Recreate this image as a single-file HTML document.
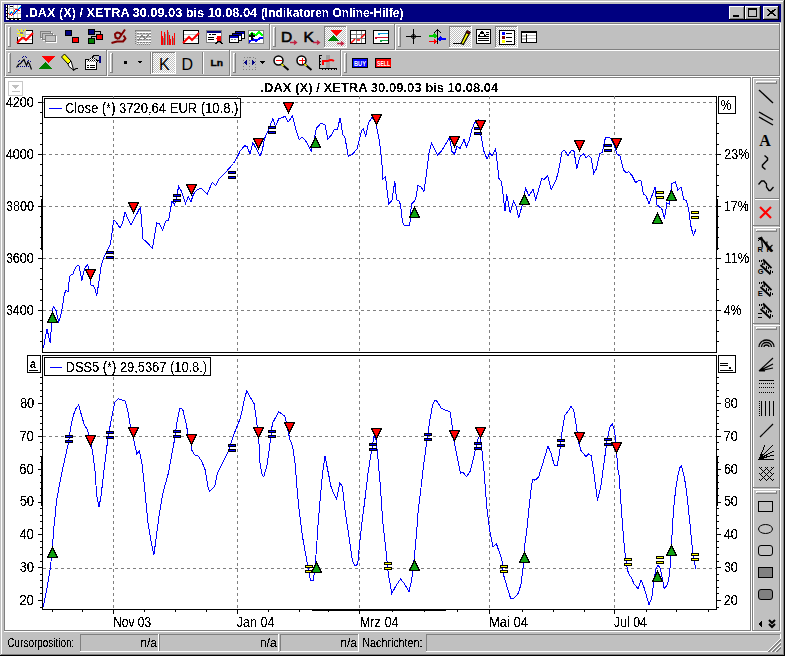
<!DOCTYPE html>
<html><head><meta charset="utf-8"><style>
html,body{margin:0;padding:0;background:#c0c0c0;}
svg{display:block;font-family:"Liberation Sans",sans-serif;}
</style></head><body>
<svg width="785" height="656" viewBox="0 0 785 656" shape-rendering="crispEdges">
<rect x="0" y="0" width="785" height="656" fill="#c0c0c0"/>
<rect x="1" y="1" width="782" height="1" fill="#ffffff"/>
<rect x="1" y="1" width="1" height="653" fill="#ffffff"/>
<rect x="783" y="1" width="1" height="654" fill="#808080"/>
<rect x="1" y="654" width="783" height="1" fill="#808080"/>
<rect x="784" y="0" width="1" height="656" fill="#000000"/>
<rect x="0" y="655" width="785" height="1" fill="#000000"/>
<rect x="4" y="4" width="777" height="18" fill="#000080"/>
<text id="t0" x="25.125" y="17" font-size="12.2" text-anchor="start" font-weight="bold" fill="#fff" textLength="232" lengthAdjust="spacingAndGlyphs" filter="url(#crispb)">.DAX (X) / XETRA 30.09.03 bis 10.08.04</text>
<text id="t1" x="260.875" y="17" font-size="12.2" text-anchor="start" font-weight="bold" fill="#fff" textLength="142.5" lengthAdjust="spacingAndGlyphs" filter="url(#crispb)">(Indikatoren Online-Hilfe)</text>
<rect x="6" y="5" width="15" height="15" fill="#fff"/>
<rect x="9" y="5" width="1" height="13" fill="#c0c0c0"/><rect x="13" y="5" width="1" height="13" fill="#c0c0c0"/><rect x="17" y="5" width="1" height="13" fill="#c0c0c0"/>
<rect x="8" y="8" width="13" height="1" fill="#c0c0c0"/><rect x="8" y="13" width="13" height="1" fill="#c0c0c0"/>
<rect x="7" y="5" width="1" height="14" fill="#000"/><rect x="7" y="18" width="14" height="1" fill="#000"/>
<path d="M6.5 7 V19" stroke="#000" stroke-dasharray="1 2"/><path d="M9 19.5 H21" stroke="#000" stroke-dasharray="2 2"/>
<rect x="10" y="6" width="3" height="1" fill="#000"/>
<path d="M8.5 14.5 L11.5 11.5 L13.5 13.5 L20.5 6.5" stroke="#0ff" fill="none"/>
<path d="M8.5 15.5 L11.5 12.5 L13.5 14.5 L20.5 7.5" stroke="#00f" fill="none"/>
<path d="M8.5 13.5 L11.5 15.5 L15.5 9.5 L17 9.5 L20.5 11.5" stroke="#f00" fill="none"/>
<rect x="729" y="6" width="16" height="14" fill="#000000"/>
<rect x="729" y="6" width="15" height="13" fill="#ffffff"/>
<rect x="730" y="7" width="14" height="12" fill="#808080"/>
<rect x="730" y="7" width="13" height="11" fill="#c0c0c0"/>
<rect x="745" y="6" width="16" height="14" fill="#000000"/>
<rect x="745" y="6" width="15" height="13" fill="#ffffff"/>
<rect x="746" y="7" width="14" height="12" fill="#808080"/>
<rect x="746" y="7" width="13" height="11" fill="#c0c0c0"/>
<rect x="763" y="6" width="16" height="14" fill="#000000"/>
<rect x="763" y="6" width="15" height="13" fill="#ffffff"/>
<rect x="764" y="7" width="14" height="12" fill="#808080"/>
<rect x="764" y="7" width="13" height="11" fill="#c0c0c0"/>
<rect x="733" y="15" width="6" height="2" fill="#000000"/>
<rect x="748" y="8" width="9" height="9" fill="#000000"/>
<rect x="749" y="10" width="7" height="6" fill="#c0c0c0"/>
<path d="M767 9 L775 16 M768 9 L776 16 M775 9 L767 16 M776 9 L768 16" stroke="#000" stroke-width="1" shape-rendering="crispEdges"/>
<rect x="4" y="23" width="776" height="1" fill="#808080"/>
<rect x="4" y="49" width="776" height="1" fill="#808080"/>
<rect x="4" y="75" width="776" height="1" fill="#808080"/>
<rect x="5" y="24" width="776" height="1" fill="#ffffff"/>
<rect x="5" y="50" width="776" height="1" fill="#ffffff"/>
<rect x="5" y="76" width="776" height="1" fill="#ffffff"/>
<rect x="4" y="23" width="1" height="53" fill="#808080"/>
<rect x="5" y="24" width="1" height="52" fill="#ffffff"/>
<rect x="779" y="24" width="1" height="52" fill="#808080"/>
<rect x="780" y="23" width="1" height="54" fill="#ffffff"/>
<rect x="8" y="27" width="3" height="20" fill="#808080"/>
<rect x="8" y="27" width="2" height="19" fill="#ffffff"/>
<rect x="9" y="28" width="1" height="18" fill="#c0c0c0"/>
<rect x="269" y="23" width="1" height="27" fill="#808080"/>
<rect x="270" y="24" width="1" height="26" fill="#ffffff"/>
<rect x="273" y="27" width="3" height="20" fill="#808080"/>
<rect x="273" y="27" width="2" height="19" fill="#ffffff"/>
<rect x="274" y="28" width="1" height="18" fill="#c0c0c0"/>
<rect x="394" y="23" width="1" height="27" fill="#808080"/>
<rect x="395" y="24" width="1" height="26" fill="#ffffff"/>
<rect x="398" y="27" width="3" height="20" fill="#808080"/>
<rect x="398" y="27" width="2" height="19" fill="#ffffff"/>
<rect x="399" y="28" width="1" height="18" fill="#c0c0c0"/>
<rect x="8" y="53" width="3" height="20" fill="#808080"/>
<rect x="8" y="53" width="2" height="19" fill="#ffffff"/>
<rect x="9" y="54" width="1" height="18" fill="#c0c0c0"/>
<rect x="106" y="49" width="1" height="27" fill="#808080"/>
<rect x="107" y="50" width="1" height="26" fill="#ffffff"/>
<rect x="110" y="53" width="3" height="20" fill="#808080"/>
<rect x="110" y="53" width="2" height="19" fill="#ffffff"/>
<rect x="111" y="54" width="1" height="18" fill="#c0c0c0"/>
<rect x="229" y="49" width="1" height="27" fill="#808080"/>
<rect x="230" y="50" width="1" height="26" fill="#ffffff"/>
<rect x="233" y="53" width="3" height="20" fill="#808080"/>
<rect x="233" y="53" width="2" height="19" fill="#ffffff"/>
<rect x="234" y="54" width="1" height="18" fill="#c0c0c0"/>
<rect x="340" y="49" width="1" height="27" fill="#808080"/>
<rect x="341" y="50" width="1" height="26" fill="#ffffff"/>
<rect x="344" y="53" width="3" height="20" fill="#808080"/>
<rect x="344" y="53" width="2" height="19" fill="#ffffff"/>
<rect x="345" y="54" width="1" height="18" fill="#c0c0c0"/>
<rect x="150" y="52" width="1" height="22" fill="#808080"/>
<rect x="151" y="52" width="1" height="22" fill="#ffffff"/>
<rect x="202" y="52" width="1" height="22" fill="#808080"/>
<rect x="203" y="52" width="1" height="22" fill="#ffffff"/>
<rect x="4" y="77" width="747" height="1" fill="#808080"/>
<rect x="4" y="77" width="1" height="554" fill="#808080"/>
<rect x="4" y="630" width="747" height="1" fill="#808080"/>
<rect x="750" y="77" width="1" height="554" fill="#808080"/>
<rect x="4" y="631" width="748" height="1" fill="#ffffff"/>
<rect x="751" y="77" width="1" height="555" fill="#ffffff"/>
<rect x="5" y="78" width="745" height="552" fill="#ffffff"/>
<rect x="752" y="77" width="1" height="555" fill="#808080"/>
<rect x="753" y="77" width="1" height="554" fill="#ffffff"/>
<rect x="779" y="77" width="1" height="555" fill="#808080"/>
<rect x="780" y="77" width="1" height="555" fill="#ffffff"/>
<rect x="752" y="77" width="28" height="1" fill="#808080"/>
<rect x="753" y="78" width="26" height="1" fill="#ffffff"/>
<rect x="752" y="631" width="29" height="1" fill="#ffffff"/>
<rect x="753" y="225" width="27" height="1" fill="#808080"/>
<rect x="753" y="323" width="27" height="1" fill="#808080"/>
<rect x="753" y="227" width="27" height="1" fill="#ffffff"/>
<rect x="753" y="487" width="27" height="1" fill="#808080"/>
<rect x="753" y="325" width="27" height="1" fill="#ffffff"/>
<rect x="753" y="630" width="27" height="1" fill="#808080"/>
<rect x="753" y="489" width="27" height="1" fill="#ffffff"/>
<rect x="756" y="81" width="21" height="3" fill="#808080"/>
<rect x="756" y="81" width="20" height="2" fill="#ffffff"/>
<rect x="757" y="82" width="19" height="1" fill="#c0c0c0"/>
<rect x="756" y="229" width="21" height="3" fill="#808080"/>
<rect x="756" y="229" width="20" height="2" fill="#ffffff"/>
<rect x="757" y="230" width="19" height="1" fill="#c0c0c0"/>
<rect x="756" y="327" width="21" height="3" fill="#808080"/>
<rect x="756" y="327" width="20" height="2" fill="#ffffff"/>
<rect x="757" y="328" width="19" height="1" fill="#c0c0c0"/>
<rect x="756" y="491" width="21" height="3" fill="#808080"/>
<rect x="756" y="491" width="20" height="2" fill="#ffffff"/>
<rect x="757" y="492" width="19" height="1" fill="#c0c0c0"/>
<rect x="755" y="198" width="24" height="1" fill="#808080"/>
<rect x="755" y="199" width="24" height="1" fill="#ffffff"/>
<text id="t2" x="7.375" y="647" font-size="12" text-anchor="start" font-weight="normal" fill="#000" textLength="67" lengthAdjust="spacingAndGlyphs" filter="url(#crisp)">Cursorposition:</text>
<rect x="80" y="634" width="79" height="1" fill="#808080"/>
<rect x="80" y="634" width="1" height="18" fill="#808080"/>
<rect x="80" y="651" width="79" height="1" fill="#ffffff"/>
<rect x="158" y="634" width="1" height="18" fill="#ffffff"/>
<rect x="159" y="634" width="120" height="1" fill="#808080"/>
<rect x="159" y="634" width="1" height="18" fill="#808080"/>
<rect x="159" y="651" width="120" height="1" fill="#ffffff"/>
<rect x="278" y="634" width="1" height="18" fill="#ffffff"/>
<rect x="280" y="634" width="79" height="1" fill="#808080"/>
<rect x="280" y="634" width="1" height="18" fill="#808080"/>
<rect x="280" y="651" width="79" height="1" fill="#ffffff"/>
<rect x="358" y="634" width="1" height="18" fill="#ffffff"/>
<rect x="426" y="634" width="355" height="1" fill="#808080"/>
<rect x="426" y="634" width="1" height="18" fill="#808080"/>
<rect x="426" y="651" width="355" height="1" fill="#ffffff"/>
<rect x="780" y="634" width="1" height="18" fill="#ffffff"/>
<text id="t3" x="157.000" y="647" font-size="12" text-anchor="end" font-weight="normal" fill="#000" filter="url(#crisp)">n/a</text>
<text id="t4" x="276.625" y="647" font-size="12" text-anchor="end" font-weight="normal" fill="#000" filter="url(#crisp)">n/a</text>
<text id="t5" x="357.000" y="647" font-size="12" text-anchor="end" font-weight="normal" fill="#000" filter="url(#crisp)">n/a</text>
<text id="t6" x="362.375" y="647" font-size="12" text-anchor="start" font-weight="normal" fill="#000" textLength="60" lengthAdjust="spacingAndGlyphs" filter="url(#crisp)">Nachrichten:</text>
<rect x="767" y="651" width="1" height="1" fill="#c0c0c0"/>
<rect x="768" y="650" width="1" height="1" fill="#c0c0c0"/>
<rect x="768" y="651" width="1" height="1" fill="#c0c0c0"/>
<rect x="769" y="649" width="1" height="1" fill="#c0c0c0"/>
<rect x="769" y="650" width="1" height="1" fill="#c0c0c0"/>
<rect x="769" y="651" width="1" height="1" fill="#c0c0c0"/>
<rect x="770" y="648" width="1" height="1" fill="#c0c0c0"/>
<rect x="770" y="649" width="1" height="1" fill="#c0c0c0"/>
<rect x="770" y="650" width="1" height="1" fill="#c0c0c0"/>
<rect x="770" y="651" width="1" height="1" fill="#c0c0c0"/>
<rect x="771" y="647" width="1" height="1" fill="#c0c0c0"/>
<rect x="771" y="648" width="1" height="1" fill="#c0c0c0"/>
<rect x="771" y="649" width="1" height="1" fill="#c0c0c0"/>
<rect x="771" y="650" width="1" height="1" fill="#c0c0c0"/>
<rect x="771" y="651" width="1" height="1" fill="#c0c0c0"/>
<rect x="772" y="646" width="1" height="1" fill="#c0c0c0"/>
<rect x="772" y="647" width="1" height="1" fill="#c0c0c0"/>
<rect x="772" y="648" width="1" height="1" fill="#c0c0c0"/>
<rect x="772" y="649" width="1" height="1" fill="#c0c0c0"/>
<rect x="772" y="650" width="1" height="1" fill="#c0c0c0"/>
<rect x="772" y="651" width="1" height="1" fill="#c0c0c0"/>
<rect x="773" y="645" width="1" height="1" fill="#c0c0c0"/>
<rect x="773" y="646" width="1" height="1" fill="#c0c0c0"/>
<rect x="773" y="647" width="1" height="1" fill="#c0c0c0"/>
<rect x="773" y="648" width="1" height="1" fill="#c0c0c0"/>
<rect x="773" y="649" width="1" height="1" fill="#c0c0c0"/>
<rect x="773" y="650" width="1" height="1" fill="#c0c0c0"/>
<rect x="773" y="651" width="1" height="1" fill="#c0c0c0"/>
<rect x="774" y="644" width="1" height="1" fill="#c0c0c0"/>
<rect x="774" y="645" width="1" height="1" fill="#c0c0c0"/>
<rect x="774" y="646" width="1" height="1" fill="#c0c0c0"/>
<rect x="774" y="647" width="1" height="1" fill="#c0c0c0"/>
<rect x="774" y="648" width="1" height="1" fill="#c0c0c0"/>
<rect x="774" y="649" width="1" height="1" fill="#c0c0c0"/>
<rect x="774" y="650" width="1" height="1" fill="#c0c0c0"/>
<rect x="774" y="651" width="1" height="1" fill="#c0c0c0"/>
<rect x="775" y="643" width="1" height="1" fill="#c0c0c0"/>
<rect x="775" y="644" width="1" height="1" fill="#c0c0c0"/>
<rect x="775" y="645" width="1" height="1" fill="#c0c0c0"/>
<rect x="775" y="646" width="1" height="1" fill="#c0c0c0"/>
<rect x="775" y="647" width="1" height="1" fill="#c0c0c0"/>
<rect x="775" y="648" width="1" height="1" fill="#c0c0c0"/>
<rect x="775" y="649" width="1" height="1" fill="#c0c0c0"/>
<rect x="775" y="650" width="1" height="1" fill="#c0c0c0"/>
<rect x="775" y="651" width="1" height="1" fill="#c0c0c0"/>
<rect x="776" y="642" width="1" height="1" fill="#c0c0c0"/>
<rect x="776" y="643" width="1" height="1" fill="#c0c0c0"/>
<rect x="776" y="644" width="1" height="1" fill="#c0c0c0"/>
<rect x="776" y="645" width="1" height="1" fill="#c0c0c0"/>
<rect x="776" y="646" width="1" height="1" fill="#c0c0c0"/>
<rect x="776" y="647" width="1" height="1" fill="#c0c0c0"/>
<rect x="776" y="648" width="1" height="1" fill="#c0c0c0"/>
<rect x="776" y="649" width="1" height="1" fill="#c0c0c0"/>
<rect x="776" y="650" width="1" height="1" fill="#c0c0c0"/>
<rect x="776" y="651" width="1" height="1" fill="#c0c0c0"/>
<rect x="777" y="641" width="1" height="1" fill="#c0c0c0"/>
<rect x="777" y="642" width="1" height="1" fill="#c0c0c0"/>
<rect x="777" y="643" width="1" height="1" fill="#c0c0c0"/>
<rect x="777" y="644" width="1" height="1" fill="#c0c0c0"/>
<rect x="777" y="645" width="1" height="1" fill="#c0c0c0"/>
<rect x="777" y="646" width="1" height="1" fill="#c0c0c0"/>
<rect x="777" y="647" width="1" height="1" fill="#c0c0c0"/>
<rect x="777" y="648" width="1" height="1" fill="#c0c0c0"/>
<rect x="777" y="649" width="1" height="1" fill="#c0c0c0"/>
<rect x="777" y="650" width="1" height="1" fill="#c0c0c0"/>
<rect x="777" y="651" width="1" height="1" fill="#c0c0c0"/>
<rect x="778" y="640" width="1" height="1" fill="#c0c0c0"/>
<rect x="778" y="641" width="1" height="1" fill="#c0c0c0"/>
<rect x="778" y="642" width="1" height="1" fill="#c0c0c0"/>
<rect x="778" y="643" width="1" height="1" fill="#c0c0c0"/>
<rect x="778" y="644" width="1" height="1" fill="#c0c0c0"/>
<rect x="778" y="645" width="1" height="1" fill="#c0c0c0"/>
<rect x="778" y="646" width="1" height="1" fill="#c0c0c0"/>
<rect x="778" y="647" width="1" height="1" fill="#c0c0c0"/>
<rect x="778" y="648" width="1" height="1" fill="#c0c0c0"/>
<rect x="778" y="649" width="1" height="1" fill="#c0c0c0"/>
<rect x="778" y="650" width="1" height="1" fill="#c0c0c0"/>
<rect x="778" y="651" width="1" height="1" fill="#c0c0c0"/>
<rect x="779" y="639" width="1" height="1" fill="#c0c0c0"/>
<rect x="779" y="640" width="1" height="1" fill="#c0c0c0"/>
<rect x="779" y="641" width="1" height="1" fill="#c0c0c0"/>
<rect x="779" y="642" width="1" height="1" fill="#c0c0c0"/>
<rect x="779" y="643" width="1" height="1" fill="#c0c0c0"/>
<rect x="779" y="644" width="1" height="1" fill="#c0c0c0"/>
<rect x="779" y="645" width="1" height="1" fill="#c0c0c0"/>
<rect x="779" y="646" width="1" height="1" fill="#c0c0c0"/>
<rect x="779" y="647" width="1" height="1" fill="#c0c0c0"/>
<rect x="779" y="648" width="1" height="1" fill="#c0c0c0"/>
<rect x="779" y="649" width="1" height="1" fill="#c0c0c0"/>
<rect x="779" y="650" width="1" height="1" fill="#c0c0c0"/>
<rect x="779" y="651" width="1" height="1" fill="#c0c0c0"/>
<rect x="780" y="638" width="1" height="1" fill="#c0c0c0"/>
<rect x="780" y="639" width="1" height="1" fill="#c0c0c0"/>
<rect x="780" y="640" width="1" height="1" fill="#c0c0c0"/>
<rect x="780" y="641" width="1" height="1" fill="#c0c0c0"/>
<rect x="780" y="642" width="1" height="1" fill="#c0c0c0"/>
<rect x="780" y="643" width="1" height="1" fill="#c0c0c0"/>
<rect x="780" y="644" width="1" height="1" fill="#c0c0c0"/>
<rect x="780" y="645" width="1" height="1" fill="#c0c0c0"/>
<rect x="780" y="646" width="1" height="1" fill="#c0c0c0"/>
<rect x="780" y="647" width="1" height="1" fill="#c0c0c0"/>
<rect x="780" y="648" width="1" height="1" fill="#c0c0c0"/>
<rect x="780" y="649" width="1" height="1" fill="#c0c0c0"/>
<rect x="780" y="650" width="1" height="1" fill="#c0c0c0"/>
<rect x="780" y="651" width="1" height="1" fill="#c0c0c0"/>
<rect x="767" y="651" width="1" height="1" fill="#ffffff"/>
<rect x="768" y="650" width="1" height="1" fill="#ffffff"/>
<rect x="769" y="649" width="1" height="1" fill="#ffffff"/>
<rect x="770" y="648" width="1" height="1" fill="#ffffff"/>
<rect x="771" y="647" width="1" height="1" fill="#ffffff"/>
<rect x="772" y="646" width="1" height="1" fill="#ffffff"/>
<rect x="773" y="645" width="1" height="1" fill="#ffffff"/>
<rect x="774" y="644" width="1" height="1" fill="#ffffff"/>
<rect x="775" y="643" width="1" height="1" fill="#ffffff"/>
<rect x="776" y="642" width="1" height="1" fill="#ffffff"/>
<rect x="777" y="641" width="1" height="1" fill="#ffffff"/>
<rect x="778" y="640" width="1" height="1" fill="#ffffff"/>
<rect x="779" y="639" width="1" height="1" fill="#ffffff"/>
<rect x="780" y="638" width="1" height="1" fill="#ffffff"/>
<rect x="768" y="651" width="1" height="1" fill="#808080"/>
<rect x="769" y="650" width="1" height="1" fill="#808080"/>
<rect x="770" y="649" width="1" height="1" fill="#808080"/>
<rect x="771" y="648" width="1" height="1" fill="#808080"/>
<rect x="772" y="647" width="1" height="1" fill="#808080"/>
<rect x="773" y="646" width="1" height="1" fill="#808080"/>
<rect x="774" y="645" width="1" height="1" fill="#808080"/>
<rect x="775" y="644" width="1" height="1" fill="#808080"/>
<rect x="776" y="643" width="1" height="1" fill="#808080"/>
<rect x="777" y="642" width="1" height="1" fill="#808080"/>
<rect x="778" y="641" width="1" height="1" fill="#808080"/>
<rect x="779" y="640" width="1" height="1" fill="#808080"/>
<rect x="780" y="639" width="1" height="1" fill="#808080"/>
<rect x="769" y="651" width="1" height="1" fill="#808080"/>
<rect x="770" y="650" width="1" height="1" fill="#808080"/>
<rect x="771" y="649" width="1" height="1" fill="#808080"/>
<rect x="772" y="648" width="1" height="1" fill="#808080"/>
<rect x="773" y="647" width="1" height="1" fill="#808080"/>
<rect x="774" y="646" width="1" height="1" fill="#808080"/>
<rect x="775" y="645" width="1" height="1" fill="#808080"/>
<rect x="776" y="644" width="1" height="1" fill="#808080"/>
<rect x="777" y="643" width="1" height="1" fill="#808080"/>
<rect x="778" y="642" width="1" height="1" fill="#808080"/>
<rect x="779" y="641" width="1" height="1" fill="#808080"/>
<rect x="780" y="640" width="1" height="1" fill="#808080"/>
<rect x="771" y="651" width="1" height="1" fill="#ffffff"/>
<rect x="772" y="650" width="1" height="1" fill="#ffffff"/>
<rect x="773" y="649" width="1" height="1" fill="#ffffff"/>
<rect x="774" y="648" width="1" height="1" fill="#ffffff"/>
<rect x="775" y="647" width="1" height="1" fill="#ffffff"/>
<rect x="776" y="646" width="1" height="1" fill="#ffffff"/>
<rect x="777" y="645" width="1" height="1" fill="#ffffff"/>
<rect x="778" y="644" width="1" height="1" fill="#ffffff"/>
<rect x="779" y="643" width="1" height="1" fill="#ffffff"/>
<rect x="780" y="642" width="1" height="1" fill="#ffffff"/>
<rect x="772" y="651" width="1" height="1" fill="#808080"/>
<rect x="773" y="650" width="1" height="1" fill="#808080"/>
<rect x="774" y="649" width="1" height="1" fill="#808080"/>
<rect x="775" y="648" width="1" height="1" fill="#808080"/>
<rect x="776" y="647" width="1" height="1" fill="#808080"/>
<rect x="777" y="646" width="1" height="1" fill="#808080"/>
<rect x="778" y="645" width="1" height="1" fill="#808080"/>
<rect x="779" y="644" width="1" height="1" fill="#808080"/>
<rect x="780" y="643" width="1" height="1" fill="#808080"/>
<rect x="773" y="651" width="1" height="1" fill="#808080"/>
<rect x="774" y="650" width="1" height="1" fill="#808080"/>
<rect x="775" y="649" width="1" height="1" fill="#808080"/>
<rect x="776" y="648" width="1" height="1" fill="#808080"/>
<rect x="777" y="647" width="1" height="1" fill="#808080"/>
<rect x="778" y="646" width="1" height="1" fill="#808080"/>
<rect x="779" y="645" width="1" height="1" fill="#808080"/>
<rect x="780" y="644" width="1" height="1" fill="#808080"/>
<rect x="775" y="651" width="1" height="1" fill="#ffffff"/>
<rect x="776" y="650" width="1" height="1" fill="#ffffff"/>
<rect x="777" y="649" width="1" height="1" fill="#ffffff"/>
<rect x="778" y="648" width="1" height="1" fill="#ffffff"/>
<rect x="779" y="647" width="1" height="1" fill="#ffffff"/>
<rect x="780" y="646" width="1" height="1" fill="#ffffff"/>
<rect x="776" y="651" width="1" height="1" fill="#808080"/>
<rect x="777" y="650" width="1" height="1" fill="#808080"/>
<rect x="778" y="649" width="1" height="1" fill="#808080"/>
<rect x="779" y="648" width="1" height="1" fill="#808080"/>
<rect x="780" y="647" width="1" height="1" fill="#808080"/>
<rect x="777" y="651" width="1" height="1" fill="#808080"/>
<rect x="778" y="650" width="1" height="1" fill="#808080"/>
<rect x="779" y="649" width="1" height="1" fill="#808080"/>
<rect x="780" y="648" width="1" height="1" fill="#808080"/>
<rect x="17.5" y="30.5" width="15" height="13" fill="#fff" stroke="#000"/>
<rect x="18" y="34" width="14" height="1" fill="#c0c0c0"/><rect x="18" y="39" width="14" height="1" fill="#c0c0c0"/>
<path d="M17 43 L23 37 L26 40 L33 33" stroke="#f00" stroke-width="2" fill="none" shape-rendering="auto"/>
<rect x="17" y="29" width="9" height="8" fill="#c0c0c0"/>
<path d="M17.5 29.5 L24.5 36.5 M25.5 29.5 L18.5 36.5 M21.5 29 V37 M17 33.5 H20" stroke="#ff0" stroke-width="1"/>
<rect x="20" y="32" width="3" height="2" fill="#808080"/><rect x="19" y="30" width="1" height="1" fill="#808080"/><rect x="23" y="30" width="1" height="1" fill="#808080"/>
<rect x="41.5" y="32.5" width="10" height="6" fill="none" stroke="#fff"/>
<rect x="40.5" y="31.5" width="10" height="6" fill="#c0c0c0" stroke="#808080"/>
<rect x="43.5" y="34.5" width="10" height="6" fill="none" stroke="#fff"/>
<rect x="42.5" y="33.5" width="10" height="6" fill="#c0c0c0" stroke="#808080"/>
<rect x="46.5" y="36.5" width="10" height="6" fill="none" stroke="#fff"/>
<rect x="45.5" y="35.5" width="10" height="6" fill="#c0c0c0" stroke="#808080"/>
<rect x="65.5" y="30.5" width="6" height="5" fill="#000080" stroke="#000"/>
<rect x="72.5" y="37.5" width="6" height="5" fill="#f00" stroke="#000"/>
<path d="M95 31.5 H100.5 V34 M96 36.5 H91.5 V39" stroke="#000" fill="none"/>
<rect x="88.5" y="29.5" width="6" height="5" fill="#000080" stroke="#000"/>
<rect x="96.5" y="34.5" width="6" height="5" fill="#f00" stroke="#000"/>
<rect x="88.5" y="38.5" width="6" height="5" fill="#008000" stroke="#000"/>
<path d="M111.5 43 L117 41.5 L123 41.5 L125.5 38.5 L123.5 35.5 M118.5 39 L125 29.5 M118.5 39 L115.5 37.5 L115 34 L117 32.5 L119.5 33 L121.5 35" stroke="#800000" stroke-width="2" fill="none" stroke-linejoin="round" shape-rendering="auto"/>
<rect x="135" y="30" width="16" height="1" fill="#808080"/>
<path d="M137 32.5 H151" stroke="#fff"/><path d="M137 33.5 H151" stroke="#808080" stroke-dasharray="2 1"/>
<path d="M137 35.5 H151" stroke="#fff"/><path d="M137 36.5 H151" stroke="#808080" stroke-dasharray="2 1"/>
<path d="M137 38.5 H151" stroke="#fff"/><path d="M137 39.5 H151" stroke="#808080" stroke-dasharray="2 1"/>
<path d="M137 41.5 H151" stroke="#fff"/><path d="M137 42.5 H151" stroke="#808080" stroke-dasharray="2 1"/>
<path d="M135.5 31 V45" stroke="#808080" stroke-dasharray="1 1"/>
<path d="M137 44.5 H151" stroke="#808080" stroke-dasharray="1 1"/><path d="M137 43.5 H151" stroke="#fff" stroke-dasharray="1 1"/>
<path d="M138 41 L142 35 L145 39 L150 33" stroke="#808080" fill="none"/>
<rect x="161" y="31" width="1" height="14" fill="#f00"/>
<rect x="162" y="36" width="1" height="9" fill="#f00"/>
<rect x="164" y="32" width="1" height="13" fill="#f00"/>
<rect x="167" y="30" width="1" height="15" fill="#f00"/>
<rect x="169" y="35" width="1" height="10" fill="#f00"/>
<rect x="170" y="39" width="1" height="6" fill="#f00"/>
<rect x="172" y="36" width="1" height="9" fill="#f00"/>
<rect x="174" y="33" width="1" height="12" fill="#f00"/>
<rect x="163" y="38" width="1" height="7" fill="#808080"/>
<rect x="165" y="34" width="1" height="11" fill="#808080"/>
<rect x="168" y="32" width="1" height="13" fill="#808080"/>
<rect x="173" y="38" width="1" height="7" fill="#808080"/>
<rect x="183.5" y="30.5" width="15" height="13" fill="#fff" stroke="#000"/>
<rect x="184" y="34" width="14" height="1" fill="#c0c0c0"/><rect x="184" y="38" width="14" height="1" fill="#c0c0c0"/>
<path d="M183 43 L189 37 L192 40 L199 33" stroke="#f00" stroke-width="2" fill="none" shape-rendering="auto"/>
<rect x="206.5" y="30.5" width="15" height="12" fill="#fff" stroke="#808080"/>
<rect x="207" y="31" width="14" height="2" fill="#000080"/>
<rect x="209" y="34" width="2" height="1" fill="#000"/><rect x="212" y="34" width="4" height="1" fill="#000"/>
<rect x="208" y="37" width="6" height="1" fill="#000"/><rect x="208" y="39" width="6" height="1" fill="#000"/>
<circle cx="219" cy="38.5" r="2.5" fill="#f00"/>
<path d="M216 44 L218 41 M222 44 L220 41" stroke="#000" stroke-width="1.5"/>
<rect x="235.5" y="31.5" width="9" height="7" fill="#fff" stroke="#000"/>
<rect x="236" y="32" width="8" height="2" fill="#0000c0"/>
<rect x="232.5" y="33.5" width="9" height="7" fill="#fff" stroke="#000"/>
<rect x="233" y="34" width="8" height="2" fill="#0000c0"/>
<rect x="229.5" y="35.5" width="9" height="7" fill="#fff" stroke="#000"/>
<rect x="230" y="36" width="8" height="2" fill="#0000c0"/>
<rect x="231" y="39" width="2" height="1" fill="#808080"/><rect x="234" y="39" width="2" height="1" fill="#808080"/>
<rect x="248.5" y="30.5" width="15" height="13" fill="#fff" stroke="#808080"/>
<path d="M249 36 L252 33 L256 35 L259 32 L263 36" stroke="#0f0" stroke-width="2" fill="none"/>
<path d="M249 42 L253 39 L256 41 L260 38 L263 38" stroke="#00f" stroke-width="2" fill="none"/>
<rect x="251" y="33" width="2" height="7" fill="#000"/><rect x="249" y="35" width="6" height="2" fill="#000"/>
<text x="281" y="41.5" font-size="15.5" fill="#000" stroke="#000" stroke-width="0.6">D</text>
<path d="M290 42.5 H296 M294 40.5 L296.5 42.5 L294 44.5" stroke="#c02040" stroke-width="1.3" fill="none" shape-rendering="auto"/>
<text x="303.5" y="41.5" font-size="15.5" fill="#000" stroke="#000" stroke-width="0.6">K</text>
<path d="M313 42.5 H319 M317 40.5 L319.5 42.5 L317 44.5" stroke="#c02040" stroke-width="1.3" fill="none" shape-rendering="auto"/>
<rect x="324" y="26" width="23" height="22" fill="url(#dither)"/><rect x="324" y="26" width="23" height="1" fill="#808080"/><rect x="324" y="26" width="1" height="22" fill="#808080"/><rect x="324" y="47" width="23" height="1" fill="#fff"/><rect x="346" y="26" width="1" height="22" fill="#fff"/>
<path d="M330 30 H342 L336 36 Z" fill="#f00"/><path d="M328 41 H339 L333.5 35 Z" fill="#008000"/>
<path d="M337 43.5 H343 M341 41.5 L343.5 43.5 L341 45.5" stroke="#c02040" stroke-width="1.3" fill="none" shape-rendering="auto"/>
<rect x="350.5" y="30.5" width="15" height="13" fill="#fff" stroke="#000"/>
<rect x="356" y="31" width="1" height="12" fill="#808080"/><rect x="361" y="31" width="1" height="12" fill="#808080"/>
<rect x="351" y="34" width="14" height="1" fill="#808080"/><rect x="351" y="38" width="14" height="1" fill="#808080"/>
<path d="M351 43 L355 39 M357 40 L360 40 M361 38 L365 34" stroke="#f00" stroke-width="1.5" shape-rendering="auto"/>
<rect x="373.5" y="30.5" width="15" height="13" fill="#fff" stroke="#000"/>
<rect x="378" y="33" width="10" height="1" fill="#10a0e0"/><rect x="378" y="33" width="2" height="2" fill="#10a0e0"/>
<rect x="375" y="37" width="13" height="1" fill="#d01030"/><rect x="375" y="37" width="2" height="2" fill="#d01030"/>
<rect x="380" y="40" width="8" height="1" fill="#10a040"/><rect x="380" y="40" width="2" height="2" fill="#10a040"/>
<rect x="406" y="36" width="15" height="1" fill="#000"/><rect x="413" y="29" width="1" height="15" fill="#000"/>
<circle cx="413.5" cy="36.5" r="2" fill="none" stroke="#000" shape-rendering="auto"/>
<rect x="437" y="30" width="1" height="14" fill="#000"/><path d="M434 33 L437.5 29.5 L441 33" stroke="#000" fill="none"/>
<path d="M429 36 H436 M434 34 L436 36 L434 38" stroke="#0c0" stroke-width="1.5" fill="none"/>
<path d="M429 41.5 H436 M434 39.5 L436 41.5 L434 43.5" stroke="#f00" stroke-width="1.5" fill="none"/>
<path d="M446 39 H439 M441 37 L439 39 L441 41" stroke="#00f" stroke-width="1.5" fill="none"/>
<rect x="449" y="26" width="23" height="22" fill="url(#dither)"/><rect x="449" y="26" width="23" height="1" fill="#808080"/><rect x="449" y="26" width="1" height="22" fill="#808080"/><rect x="449" y="47" width="23" height="1" fill="#fff"/><rect x="471" y="26" width="1" height="22" fill="#fff"/>
<path d="M453 43.5 H462" stroke="#000"/>
<path d="M461 43.5 L466.3 32.5 L469.2 33.8 L463.3 44.5 Z" fill="#ff0" stroke="#000" stroke-width="1.2" shape-rendering="auto"/><path d="M466 32.5 L467 30.5 L470.5 32 L469.5 34 Z" fill="#800000" stroke="#000" stroke-width="0.8" shape-rendering="auto"/>
<rect x="476.5" y="29.5" width="14" height="14" fill="#fff" stroke="#000"/>
<path d="M479 35.5 L482 31 L485 35.5 M478 35.5 H480 M484 35.5 H486 M480 33.5 H484" stroke="#000" stroke-width="1" fill="none"/>
<rect x="486" y="32" width="3" height="1" fill="#000"/><rect x="486" y="34" width="3" height="1" fill="#000"/><rect x="478" y="36" width="11" height="1" fill="#000"/>
<rect x="478" y="38" width="11" height="1" fill="#000"/><rect x="478" y="40" width="11" height="1" fill="#000"/>
<rect x="495" y="26" width="23" height="22" fill="url(#dither)"/><rect x="495" y="26" width="23" height="1" fill="#808080"/><rect x="495" y="26" width="1" height="22" fill="#808080"/><rect x="495" y="47" width="23" height="1" fill="#fff"/><rect x="517" y="26" width="1" height="22" fill="#fff"/>
<rect x="499.5" y="30.5" width="15" height="14" fill="#fff" stroke="#000"/>
<rect x="502" y="32" width="3" height="3" fill="#00f"/><rect x="502" y="36" width="3" height="3" fill="#800000"/><rect x="502" y="40" width="3" height="3" fill="#ff0"/>
<rect x="506" y="33" width="6" height="1" fill="#000"/><rect x="506" y="37" width="6" height="1" fill="#000"/><rect x="506" y="41" width="6" height="1" fill="#000"/>
<rect x="521.5" y="31.5" width="15" height="11" fill="#fff" stroke="#000"/>
<rect x="522" y="32" width="14" height="1" fill="#000"/>
<rect x="526" y="34" width="1" height="8" fill="#000"/>
<rect x="522" y="35" width="4" height="2" fill="#c0c0c0"/><rect x="522" y="38" width="4" height="2" fill="#c0c0c0"/>
<rect x="527" y="35" width="9" height="1" fill="#c0c0c0"/><rect x="527" y="38" width="9" height="1" fill="#c0c0c0"/>
<path d="M16.5 67.5 L18.5 64.5 L20.5 63.5 L22.5 61 L24 59.5 L25 62 L26.5 65.5 L28 62 L29.5 64 L31.5 69.5" stroke="#000" stroke-width="1.2" fill="none" shape-rendering="auto"/>
<rect x="22" y="57" width="1" height="1" fill="#000080"/>
<rect x="23" y="56" width="1" height="1" fill="#000080"/>
<rect x="25" y="56" width="1" height="1" fill="#000080"/>
<rect x="26" y="57" width="1" height="1" fill="#000080"/>
<rect x="18" y="61" width="1" height="1" fill="#000080"/>
<rect x="19" y="60" width="1" height="1" fill="#000080"/>
<rect x="21" y="61" width="1" height="1" fill="#000080"/>
<rect x="27" y="61" width="1" height="1" fill="#000080"/>
<rect x="28" y="60" width="1" height="1" fill="#000080"/>
<rect x="30" y="61" width="1" height="1" fill="#000080"/>
<rect x="18" y="66" width="1" height="1" fill="#000080"/>
<rect x="20" y="66" width="1" height="1" fill="#000080"/>
<rect x="22" y="66" width="1" height="1" fill="#000080"/>
<rect x="24" y="66" width="1" height="1" fill="#000080"/>
<rect x="26" y="66" width="1" height="1" fill="#000080"/>
<rect x="28" y="66" width="1" height="1" fill="#000080"/>
<path d="M42 56 H55 L48.5 63 Z" fill="#f00"/><path d="M39 69 H52 L45.5 62 Z" fill="#008000"/>
<path d="M61.5 57 L64.5 54 L71 61 L68 64 Z" fill="#ff0" stroke="#000" stroke-width="1" shape-rendering="auto"/>
<path d="M68 64 L71 61 L72.5 66 L73.5 70 L69 66.5 Z" fill="#fff" stroke="#000" stroke-width="1" shape-rendering="auto"/>
<path d="M73 70.5 L76 68.5 H78" stroke="#000" fill="none" stroke-width="1.2" shape-rendering="auto"/>
<rect x="85.5" y="59.5" width="11" height="10" fill="#fff" stroke="#000"/>
<path d="M87 62 L92.5 56 L98 62 Z" fill="url(#dither2)"/>
<rect x="87" y="65" width="2" height="1" fill="#000"/><rect x="90" y="65" width="5" height="1" fill="#000"/>
<rect x="87" y="67" width="2" height="1" fill="#000"/><rect x="90" y="67" width="5" height="1" fill="#000"/>
<path d="M92 57.5 L94 55.5 H99 M98.5 60 L97 61.5" stroke="#000" fill="none"/>
<rect x="99" y="56" width="2" height="7" fill="#000080"/>
<rect x="124" y="61" width="3" height="3" fill="#000"/>
<path d="M137 61 H142 L139.5 63.5 Z" fill="#000"/>
<rect x="152" y="52" width="24" height="22" fill="url(#dither)"/><rect x="152" y="52" width="24" height="1" fill="#808080"/><rect x="152" y="52" width="1" height="22" fill="#808080"/><rect x="152" y="73" width="24" height="1" fill="#fff"/><rect x="175" y="52" width="1" height="22" fill="#fff"/>
<text x="159" y="69.5" font-size="16" fill="#000">K</text>
<text x="181.5" y="69.5" font-size="16" fill="#000">D</text>
<text x="210.5" y="66" font-size="9.5" font-weight="bold" fill="#000" stroke="#000" stroke-width="0.4" textLength="12.5" lengthAdjust="spacingAndGlyphs">Ln</text>
<rect x="243.5" y="57.5" width="12" height="12" fill="none" stroke="#808080" stroke-dasharray="1 2"/>
<path d="M249.5 57 V70" stroke="#808080" stroke-dasharray="1 2"/>
<path d="M247 60 V65 L244 62.5 Z M252 60 V65 L255 62.5 Z" fill="#000080"/>
<path d="M259 61 H265 L262 64 Z" fill="#000"/>
<circle cx="278.5" cy="60.5" r="4.5" fill="#fff" stroke="#000" stroke-width="1.5" shape-rendering="auto"/>
<path d="M281.5 64 L288.5 70" stroke="#000" stroke-width="2" shape-rendering="auto"/>
<path d="M281.5 64 L283.5 66" stroke="#ff0" stroke-width="1.5" shape-rendering="auto"/>
<rect x="276.0" y="60" width="6" height="1" fill="#f00"/>
<circle cx="301.5" cy="60.5" r="4.5" fill="#fff" stroke="#000" stroke-width="1.5" shape-rendering="auto"/>
<path d="M304.5 64 L311.5 70" stroke="#000" stroke-width="2" shape-rendering="auto"/>
<path d="M304.5 64 L306.5 66" stroke="#ff0" stroke-width="1.5" shape-rendering="auto"/>
<rect x="299.0" y="60" width="6" height="1" fill="#f00"/>
<rect x="301.5" y="58" width="1" height="6" fill="#f00"/>
<rect x="326" y="55" width="4" height="14" fill="#a0a0a0"/>
<path d="M319.5 55 V69 M319 55 H322 M319 58 H321 M319 61 H321 M319 64 H321 M319 68.5 H337 M322 68 V70 M325 68 V70 M328 68 V70 M331 68 V70 M334 68 V70 M336.5 68 V70" stroke="#000" fill="none"/>
<path d="M323 65 V61 H328 Q331 59 334 61" stroke="#f00" stroke-width="2" fill="none" shape-rendering="auto"/>
<rect x="352" y="58" width="16" height="10" fill="#000"/><rect x="353" y="59" width="14" height="8" fill="#00f"/>
<text x="360" y="65.5" font-size="7" font-weight="bold" fill="#fff" text-anchor="middle" textLength="12" lengthAdjust="spacingAndGlyphs">BUY</text>
<rect x="375" y="58" width="16" height="10" fill="#000"/><rect x="376" y="59" width="15" height="8" fill="#f00"/>
<text x="383.5" y="65.5" font-size="7" font-weight="bold" fill="#fff" text-anchor="middle" textLength="13" lengthAdjust="spacingAndGlyphs">SELL</text>
<path d="M759 90 L773 103" stroke="#000" stroke-width="1.4" shape-rendering="auto"/>
<path d="M759 112 L773 120 M759 117 L773 125" stroke="#000" stroke-width="1.4" shape-rendering="auto"/>
<text x="765" y="146" font-size="16" font-weight="bold" font-family="Liberation Serif" text-anchor="middle" fill="#000">A</text>
<path d="M764.5 155.5 L767.5 158 L767.5 160 L762.5 165 L762.5 167 L765.5 169.5" stroke="#000" stroke-width="1.5" fill="none" shape-rendering="auto"/>
<path d="M758.5 184.5 L761.5 181 L764 181 L766.5 184 L766.5 187 L769 190.5 L770.5 190.5 L773.5 187" stroke="#000" stroke-width="1.3" fill="none" shape-rendering="auto"/>
<path d="M760 207 L771 218 M771 207 L760 218" stroke="#f00" stroke-width="2.2" shape-rendering="auto"/>
<path d="M761 238 L772.5 251.5" stroke="#000" stroke-width="2" shape-rendering="auto"/>
<path d="M758 238.5 L762 237 L761 240 Z M758 241 L760 239" stroke="#000" fill="#000" shape-rendering="auto"/>
<path d="M761.5 238 L762.5 247.5 M763.5 241 L766.5 246 L767 241.5" stroke="#000" stroke-width="1.3" fill="none" shape-rendering="auto"/>
<path d="M768 249 L772.5 245" stroke="#000" stroke-width="1.2" shape-rendering="auto"/>
<text x="757.6" y="252" font-size="7.5" font-weight="bold" fill="#000">R</text><text x="766.5" y="252" font-size="7.5" font-weight="bold" fill="#000">K</text>
<path d="M763 259.5 L771.5 268.2 M760.5 265 L770.5 274.2" stroke="#000" stroke-width="1.9" fill="none" shape-rendering="auto"/>
<path d="M764.2 260 V265" stroke="#000" stroke-width="1.4" shape-rendering="auto"/>
<rect x="759" y="260" width="1" height="2" fill="#000"/>
<rect x="761" y="260" width="1" height="2" fill="#000"/>
<rect x="762" y="263" width="1" height="2" fill="#000"/>
<rect x="766" y="266" width="1" height="3" fill="#000"/>
<rect x="768" y="267" width="1" height="2" fill="#000"/>
<rect x="770" y="270" width="1" height="3" fill="#000"/>
<rect x="772" y="271" width="1" height="2" fill="#000"/>
<text x="757.8" y="274" font-size="7.5" font-weight="bold" fill="#000">G</text>
<path d="M763 281.5 L771.5 290.2 M760.5 287 L770.5 296.2" stroke="#000" stroke-width="1.9" fill="none" shape-rendering="auto"/>
<path d="M764.2 282 V287" stroke="#000" stroke-width="1.4" shape-rendering="auto"/>
<rect x="759" y="282" width="1" height="2" fill="#000"/>
<rect x="761" y="282" width="1" height="2" fill="#000"/>
<rect x="762" y="285" width="1" height="2" fill="#000"/>
<rect x="766" y="288" width="1" height="3" fill="#000"/>
<rect x="768" y="289" width="1" height="2" fill="#000"/>
<rect x="770" y="292" width="1" height="3" fill="#000"/>
<rect x="772" y="293" width="1" height="2" fill="#000"/>
<text x="757.8" y="296" font-size="7.5" font-weight="bold" fill="#000">E</text>
<path d="M763 303.5 L771.5 312.2 M760.5 309 L770.5 318.2" stroke="#000" stroke-width="1.9" fill="none" shape-rendering="auto"/>
<path d="M764.2 304 V309" stroke="#000" stroke-width="1.4" shape-rendering="auto"/>
<rect x="759" y="304" width="1" height="2" fill="#000"/>
<rect x="761" y="304" width="1" height="2" fill="#000"/>
<rect x="762" y="307" width="1" height="2" fill="#000"/>
<rect x="766" y="310" width="1" height="3" fill="#000"/>
<rect x="768" y="311" width="1" height="2" fill="#000"/>
<rect x="770" y="314" width="1" height="3" fill="#000"/>
<rect x="772" y="315" width="1" height="2" fill="#000"/>
<rect x="758" y="313" width="4" height="1" fill="#000"/><rect x="758" y="317" width="4" height="1" fill="#000"/>
<path d="M759 347 A7.5 7 0 0 1 774 347 M761.5 347 A5 4.5 0 0 1 771.5 347 M764 347 A2.5 2 0 0 1 769 347" stroke="#000" stroke-width="1.3" fill="none" shape-rendering="auto"/>
<path d="M759 371 L773 358 M759 371 L773 364 M759 371 L773 368 M759 371 H765" stroke="#000" stroke-width="1.2" fill="none" shape-rendering="auto"/>
<rect x="759" y="380" width="15" height="1" fill="#000"/>
<path d="M759 383.5 H774" stroke="#000" stroke-dasharray="1 1"/>
<path d="M759 387.5 H774" stroke="#000" stroke-dasharray="1 1"/>
<path d="M759 392.5 H774" stroke="#000" stroke-dasharray="1 1"/>
<path d="M759.5 401 V416" stroke="#000" stroke-dasharray="1 1"/>
<rect x="761" y="401" width="1" height="15" fill="#000"/>
<rect x="765" y="401" width="1" height="15" fill="#000"/>
<rect x="769" y="401" width="1" height="15" fill="#000"/>
<rect x="773" y="401" width="1" height="15" fill="#000"/>
<path d="M760 437 L773 424" stroke="#000" stroke-width="1.2" shape-rendering="auto"/>
<path d="M759 459 L765 445 M759 459 L773 445 M759 459 L774 451 M759 459 L774 455 M759 459.5 H774" stroke="#000" stroke-width="1" fill="none"/>
<path d="M758 460 L762 453 L765 460 Z" fill="#000"/>
<path d="M759.5 467.5 L773.5 481.5 M765.5 467.5 L773.5 475.5 M771.5 467.5 L773.5 469.5 M759.5 473.5 L767.5 481.5 M759.5 479.5 L761.5 481.5 M761.5 467.5 L759.5 469.5 M767.5 467.5 L759.5 475.5 M773.5 467.5 L759.5 481.5 M773.5 473.5 L765.5 481.5 M773.5 479.5 L771.5 481.5" stroke="#000" stroke-width="1" fill="none"/>
<rect x="758.5" y="501.5" width="14" height="10" fill="none" stroke="#000"/>
<ellipse cx="765.5" cy="529" rx="7" ry="4.5" fill="none" stroke="#000" shape-rendering="auto"/>
<rect x="758.5" y="545.5" width="14" height="10" rx="2.5" fill="none" stroke="#000" shape-rendering="auto"/>
<rect x="758.5" y="567.5" width="14" height="10" fill="#808080" stroke="#000"/>
<rect x="758.5" y="589.5" width="14" height="10" rx="2.5" fill="#808080" stroke="#000" shape-rendering="auto"/>
<path d="M762 621 V627 L758 624 Z" fill="#000"/>
<path d="M769 620 L772 623 L775 620 M769 624 L772 627 L775 624" stroke="#000" stroke-width="2" fill="none" shape-rendering="auto"/>
<rect x="8.5" y="81.5" width="14" height="14" fill="none" stroke="#c8c8c8"/>
<path d="M12 85 H19 L15.5 89 Z" fill="#c0c0c0"/>
<rect x="12" y="91" width="8" height="1" fill="#c0c0c0"/>
<text id="t7" x="379.375" y="92" font-size="13.5" text-anchor="middle" font-weight="bold" fill="#000" textLength="238" lengthAdjust="spacingAndGlyphs" filter="url(#crispb)">.DAX (X) / XETRA 30.09.03 bis 10.08.04</text>
<rect x="42" y="96" width="675" height="1" fill="#000000"/>
<rect x="42" y="352" width="675" height="1" fill="#000000"/>
<rect x="42" y="96" width="1" height="257" fill="#000000"/>
<rect x="716" y="96" width="1" height="257" fill="#000000"/>
<rect x="42" y="355" width="675" height="1" fill="#000000"/>
<rect x="42" y="609" width="675" height="1" fill="#000000"/>
<rect x="42" y="355" width="1" height="255" fill="#000000"/>
<rect x="716" y="355" width="1" height="255" fill="#000000"/>
<line x1="43" y1="102.5" x2="716" y2="102.5" stroke="#808080" stroke-dasharray="3 3" stroke-dashoffset="0"/>
<line x1="43" y1="154.5" x2="716" y2="154.5" stroke="#808080" stroke-dasharray="3 3" stroke-dashoffset="0"/>
<line x1="43" y1="206.5" x2="716" y2="206.5" stroke="#808080" stroke-dasharray="3 3" stroke-dashoffset="0"/>
<line x1="43" y1="258.5" x2="716" y2="258.5" stroke="#808080" stroke-dasharray="3 3" stroke-dashoffset="0"/>
<line x1="43" y1="310.5" x2="716" y2="310.5" stroke="#808080" stroke-dasharray="3 3" stroke-dashoffset="0"/>
<line x1="43" y1="436.5" x2="716" y2="436.5" stroke="#808080" stroke-dasharray="3 3" stroke-dashoffset="0"/>
<line x1="43" y1="568.5" x2="716" y2="568.5" stroke="#808080" stroke-dasharray="3 3" stroke-dashoffset="0"/>
<line x1="113.5" y1="96" x2="113.5" y2="352" stroke="#808080" stroke-dasharray="3 3"/>
<line x1="113.5" y1="359" x2="113.5" y2="609" stroke="#808080" stroke-dasharray="3 3"/>
<line x1="237.5" y1="96" x2="237.5" y2="352" stroke="#808080" stroke-dasharray="3 3"/>
<line x1="237.5" y1="359" x2="237.5" y2="609" stroke="#808080" stroke-dasharray="3 3"/>
<line x1="359.5" y1="96" x2="359.5" y2="352" stroke="#808080" stroke-dasharray="3 3"/>
<line x1="359.5" y1="359" x2="359.5" y2="609" stroke="#808080" stroke-dasharray="3 3"/>
<line x1="489.5" y1="96" x2="489.5" y2="352" stroke="#808080" stroke-dasharray="3 3"/>
<line x1="489.5" y1="359" x2="489.5" y2="609" stroke="#808080" stroke-dasharray="3 3"/>
<line x1="614.5" y1="96" x2="614.5" y2="352" stroke="#808080" stroke-dasharray="3 3"/>
<line x1="614.5" y1="359" x2="614.5" y2="609" stroke="#808080" stroke-dasharray="3 3"/>
<rect x="38" y="102" width="4" height="1" fill="#000000"/>
<rect x="40" y="112" width="2" height="1" fill="#000000"/>
<rect x="40" y="123" width="2" height="1" fill="#000000"/>
<rect x="717" y="123" width="2" height="1" fill="#000000"/>
<rect x="40" y="133" width="2" height="1" fill="#000000"/>
<rect x="717" y="133" width="2" height="1" fill="#000000"/>
<rect x="40" y="144" width="2" height="1" fill="#000000"/>
<rect x="717" y="144" width="2" height="1" fill="#000000"/>
<rect x="38" y="154" width="4" height="1" fill="#000000"/>
<rect x="717" y="154" width="4" height="1" fill="#000000"/>
<rect x="40" y="164" width="2" height="1" fill="#000000"/>
<rect x="717" y="164" width="2" height="1" fill="#000000"/>
<rect x="40" y="175" width="2" height="1" fill="#000000"/>
<rect x="717" y="175" width="2" height="1" fill="#000000"/>
<rect x="40" y="185" width="2" height="1" fill="#000000"/>
<rect x="717" y="185" width="2" height="1" fill="#000000"/>
<rect x="40" y="196" width="2" height="1" fill="#000000"/>
<rect x="717" y="196" width="2" height="1" fill="#000000"/>
<rect x="38" y="206" width="4" height="1" fill="#000000"/>
<rect x="717" y="206" width="4" height="1" fill="#000000"/>
<rect x="40" y="216" width="2" height="1" fill="#000000"/>
<rect x="717" y="216" width="2" height="1" fill="#000000"/>
<rect x="40" y="227" width="2" height="1" fill="#000000"/>
<rect x="717" y="227" width="2" height="1" fill="#000000"/>
<rect x="40" y="237" width="2" height="1" fill="#000000"/>
<rect x="717" y="237" width="2" height="1" fill="#000000"/>
<rect x="40" y="248" width="2" height="1" fill="#000000"/>
<rect x="717" y="248" width="2" height="1" fill="#000000"/>
<rect x="38" y="258" width="4" height="1" fill="#000000"/>
<rect x="717" y="258" width="4" height="1" fill="#000000"/>
<rect x="40" y="268" width="2" height="1" fill="#000000"/>
<rect x="717" y="268" width="2" height="1" fill="#000000"/>
<rect x="40" y="279" width="2" height="1" fill="#000000"/>
<rect x="717" y="279" width="2" height="1" fill="#000000"/>
<rect x="40" y="289" width="2" height="1" fill="#000000"/>
<rect x="717" y="289" width="2" height="1" fill="#000000"/>
<rect x="40" y="300" width="2" height="1" fill="#000000"/>
<rect x="717" y="300" width="2" height="1" fill="#000000"/>
<rect x="38" y="310" width="4" height="1" fill="#000000"/>
<rect x="717" y="310" width="4" height="1" fill="#000000"/>
<rect x="40" y="320" width="2" height="1" fill="#000000"/>
<rect x="717" y="320" width="2" height="1" fill="#000000"/>
<rect x="40" y="331" width="2" height="1" fill="#000000"/>
<rect x="717" y="331" width="2" height="1" fill="#000000"/>
<rect x="40" y="341" width="2" height="1" fill="#000000"/>
<rect x="717" y="341" width="2" height="1" fill="#000000"/>
<text id="t8" x="33.875" y="107" font-size="14" text-anchor="end" font-weight="normal" fill="#000" textLength="28" lengthAdjust="spacingAndGlyphs" filter="url(#crisp)">4200</text>
<text id="t9" x="33.875" y="159" font-size="14" text-anchor="end" font-weight="normal" fill="#000" textLength="28" lengthAdjust="spacingAndGlyphs" filter="url(#crisp)">4000</text>
<text id="t10" x="34.000" y="211" font-size="14" text-anchor="end" font-weight="normal" fill="#000" textLength="28" lengthAdjust="spacingAndGlyphs" filter="url(#crisp)">3800</text>
<text id="t11" x="33.875" y="263" font-size="14" text-anchor="end" font-weight="normal" fill="#000" textLength="28" lengthAdjust="spacingAndGlyphs" filter="url(#crisp)">3600</text>
<text id="t12" x="33.875" y="315" font-size="14" text-anchor="end" font-weight="normal" fill="#000" textLength="28" lengthAdjust="spacingAndGlyphs" filter="url(#crisp)">3400</text>
<text id="t13" x="724.250" y="159" font-size="14" text-anchor="start" font-weight="normal" fill="#000" textLength="25" lengthAdjust="spacingAndGlyphs" filter="url(#crisp)">23%</text>
<text id="t14" x="723.875" y="211" font-size="14" text-anchor="start" font-weight="normal" fill="#000" textLength="25" lengthAdjust="spacingAndGlyphs" filter="url(#crisp)">17%</text>
<text id="t15" x="724.375" y="263" font-size="14" text-anchor="start" font-weight="normal" fill="#000" textLength="25" lengthAdjust="spacingAndGlyphs" filter="url(#crisp)">11%</text>
<text id="t16" x="723.875" y="315" font-size="14" text-anchor="start" font-weight="normal" fill="#000" textLength="17.5" lengthAdjust="spacingAndGlyphs" filter="url(#crisp)">4%</text>
<rect x="41" y="199" width="1" height="51" fill="#000000"/>
<rect x="717" y="199" width="1" height="51" fill="#000000"/>
<rect x="40" y="377" width="2" height="1" fill="#000000"/>
<rect x="717" y="377" width="2" height="1" fill="#000000"/>
<rect x="40" y="383" width="2" height="1" fill="#000000"/>
<rect x="717" y="383" width="2" height="1" fill="#000000"/>
<rect x="40" y="390" width="2" height="1" fill="#000000"/>
<rect x="717" y="390" width="2" height="1" fill="#000000"/>
<rect x="40" y="396" width="2" height="1" fill="#000000"/>
<rect x="717" y="396" width="2" height="1" fill="#000000"/>
<rect x="38" y="403" width="4" height="1" fill="#000000"/>
<rect x="717" y="403" width="4" height="1" fill="#000000"/>
<rect x="40" y="410" width="2" height="1" fill="#000000"/>
<rect x="717" y="410" width="2" height="1" fill="#000000"/>
<rect x="40" y="416" width="2" height="1" fill="#000000"/>
<rect x="717" y="416" width="2" height="1" fill="#000000"/>
<rect x="40" y="423" width="2" height="1" fill="#000000"/>
<rect x="717" y="423" width="2" height="1" fill="#000000"/>
<rect x="40" y="429" width="2" height="1" fill="#000000"/>
<rect x="717" y="429" width="2" height="1" fill="#000000"/>
<rect x="38" y="436" width="4" height="1" fill="#000000"/>
<rect x="717" y="436" width="4" height="1" fill="#000000"/>
<rect x="40" y="442" width="2" height="1" fill="#000000"/>
<rect x="717" y="442" width="2" height="1" fill="#000000"/>
<rect x="40" y="449" width="2" height="1" fill="#000000"/>
<rect x="717" y="449" width="2" height="1" fill="#000000"/>
<rect x="40" y="456" width="2" height="1" fill="#000000"/>
<rect x="717" y="456" width="2" height="1" fill="#000000"/>
<rect x="40" y="462" width="2" height="1" fill="#000000"/>
<rect x="717" y="462" width="2" height="1" fill="#000000"/>
<rect x="38" y="469" width="4" height="1" fill="#000000"/>
<rect x="717" y="469" width="4" height="1" fill="#000000"/>
<rect x="40" y="475" width="2" height="1" fill="#000000"/>
<rect x="717" y="475" width="2" height="1" fill="#000000"/>
<rect x="40" y="482" width="2" height="1" fill="#000000"/>
<rect x="717" y="482" width="2" height="1" fill="#000000"/>
<rect x="40" y="488" width="2" height="1" fill="#000000"/>
<rect x="717" y="488" width="2" height="1" fill="#000000"/>
<rect x="40" y="495" width="2" height="1" fill="#000000"/>
<rect x="717" y="495" width="2" height="1" fill="#000000"/>
<rect x="38" y="502" width="4" height="1" fill="#000000"/>
<rect x="717" y="502" width="4" height="1" fill="#000000"/>
<rect x="40" y="508" width="2" height="1" fill="#000000"/>
<rect x="717" y="508" width="2" height="1" fill="#000000"/>
<rect x="40" y="515" width="2" height="1" fill="#000000"/>
<rect x="717" y="515" width="2" height="1" fill="#000000"/>
<rect x="40" y="521" width="2" height="1" fill="#000000"/>
<rect x="717" y="521" width="2" height="1" fill="#000000"/>
<rect x="40" y="528" width="2" height="1" fill="#000000"/>
<rect x="717" y="528" width="2" height="1" fill="#000000"/>
<rect x="38" y="534" width="4" height="1" fill="#000000"/>
<rect x="717" y="534" width="4" height="1" fill="#000000"/>
<rect x="40" y="541" width="2" height="1" fill="#000000"/>
<rect x="717" y="541" width="2" height="1" fill="#000000"/>
<rect x="40" y="547" width="2" height="1" fill="#000000"/>
<rect x="717" y="547" width="2" height="1" fill="#000000"/>
<rect x="40" y="554" width="2" height="1" fill="#000000"/>
<rect x="717" y="554" width="2" height="1" fill="#000000"/>
<rect x="40" y="561" width="2" height="1" fill="#000000"/>
<rect x="717" y="561" width="2" height="1" fill="#000000"/>
<rect x="38" y="567" width="4" height="1" fill="#000000"/>
<rect x="717" y="567" width="4" height="1" fill="#000000"/>
<rect x="40" y="574" width="2" height="1" fill="#000000"/>
<rect x="717" y="574" width="2" height="1" fill="#000000"/>
<rect x="40" y="580" width="2" height="1" fill="#000000"/>
<rect x="717" y="580" width="2" height="1" fill="#000000"/>
<rect x="40" y="587" width="2" height="1" fill="#000000"/>
<rect x="717" y="587" width="2" height="1" fill="#000000"/>
<rect x="40" y="593" width="2" height="1" fill="#000000"/>
<rect x="717" y="593" width="2" height="1" fill="#000000"/>
<rect x="38" y="600" width="4" height="1" fill="#000000"/>
<rect x="717" y="600" width="4" height="1" fill="#000000"/>
<rect x="40" y="607" width="2" height="1" fill="#000000"/>
<rect x="717" y="607" width="2" height="1" fill="#000000"/>
<text id="t17" x="34.375" y="408" font-size="14" text-anchor="end" font-weight="normal" fill="#000" textLength="14.5" lengthAdjust="spacingAndGlyphs" filter="url(#crisp)">80</text>
<text id="t18" x="723.875" y="408" font-size="14" text-anchor="start" font-weight="normal" fill="#000" textLength="14" lengthAdjust="spacingAndGlyphs" filter="url(#crisp)">80</text>
<text id="t19" x="33.875" y="441" font-size="14" text-anchor="end" font-weight="normal" fill="#000" textLength="14.5" lengthAdjust="spacingAndGlyphs" filter="url(#crisp)">70</text>
<text id="t20" x="723.750" y="441" font-size="14" text-anchor="start" font-weight="normal" fill="#000" textLength="14" lengthAdjust="spacingAndGlyphs" filter="url(#crisp)">70</text>
<text id="t21" x="33.750" y="474" font-size="14" text-anchor="end" font-weight="normal" fill="#000" textLength="14.5" lengthAdjust="spacingAndGlyphs" filter="url(#crisp)">60</text>
<text id="t22" x="723.875" y="474" font-size="14" text-anchor="start" font-weight="normal" fill="#000" textLength="14" lengthAdjust="spacingAndGlyphs" filter="url(#crisp)">60</text>
<text id="t23" x="34.125" y="506" font-size="14" text-anchor="end" font-weight="normal" fill="#000" textLength="14.5" lengthAdjust="spacingAndGlyphs" filter="url(#crisp)">50</text>
<text id="t24" x="723.875" y="506" font-size="14" text-anchor="start" font-weight="normal" fill="#000" textLength="14" lengthAdjust="spacingAndGlyphs" filter="url(#crisp)">50</text>
<text id="t25" x="33.875" y="539" font-size="14" text-anchor="end" font-weight="normal" fill="#000" textLength="14.5" lengthAdjust="spacingAndGlyphs" filter="url(#crisp)">40</text>
<text id="t26" x="723.875" y="539" font-size="14" text-anchor="start" font-weight="normal" fill="#000" textLength="14" lengthAdjust="spacingAndGlyphs" filter="url(#crisp)">40</text>
<text id="t27" x="34.125" y="572" font-size="14" text-anchor="end" font-weight="normal" fill="#000" textLength="14.5" lengthAdjust="spacingAndGlyphs" filter="url(#crisp)">30</text>
<text id="t28" x="723.875" y="572" font-size="14" text-anchor="start" font-weight="normal" fill="#000" textLength="14" lengthAdjust="spacingAndGlyphs" filter="url(#crisp)">30</text>
<text id="t29" x="33.875" y="605" font-size="14" text-anchor="end" font-weight="normal" fill="#000" textLength="14.5" lengthAdjust="spacingAndGlyphs" filter="url(#crisp)">20</text>
<text id="t30" x="723.750" y="605" font-size="14" text-anchor="start" font-weight="normal" fill="#000" textLength="14" lengthAdjust="spacingAndGlyphs" filter="url(#crisp)">20</text>
<rect x="41" y="456" width="1" height="50" fill="#000000"/>
<rect x="717" y="456" width="1" height="50" fill="#000000"/>
<rect x="52" y="610" width="1" height="2" fill="#000000"/>
<rect x="82" y="610" width="1" height="2" fill="#000000"/>
<rect x="113" y="610" width="1" height="4" fill="#000000"/>
<rect x="144" y="610" width="1" height="2" fill="#000000"/>
<rect x="175" y="610" width="1" height="2" fill="#000000"/>
<rect x="206" y="610" width="1" height="2" fill="#000000"/>
<rect x="237" y="610" width="1" height="4" fill="#000000"/>
<rect x="268" y="610" width="1" height="2" fill="#000000"/>
<rect x="299" y="610" width="1" height="2" fill="#000000"/>
<rect x="328" y="610" width="1" height="2" fill="#000000"/>
<rect x="359" y="610" width="1" height="4" fill="#000000"/>
<rect x="392" y="610" width="1" height="2" fill="#000000"/>
<rect x="424" y="610" width="1" height="2" fill="#000000"/>
<rect x="457" y="610" width="1" height="2" fill="#000000"/>
<rect x="489" y="610" width="1" height="4" fill="#000000"/>
<rect x="522" y="610" width="1" height="2" fill="#000000"/>
<rect x="553" y="610" width="1" height="2" fill="#000000"/>
<rect x="584" y="610" width="1" height="2" fill="#000000"/>
<rect x="614" y="610" width="1" height="4" fill="#000000"/>
<rect x="646" y="610" width="1" height="2" fill="#000000"/>
<rect x="676" y="610" width="1" height="2" fill="#000000"/>
<rect x="708" y="610" width="1" height="2" fill="#000000"/>
<rect x="312" y="610" width="134" height="1" fill="#000000"/>
<text id="t31" x="113.125" y="627" font-size="14" text-anchor="start" font-weight="normal" fill="#000" textLength="38" lengthAdjust="spacingAndGlyphs" filter="url(#crisp)">Nov 03</text>
<text id="t32" x="236.625" y="627" font-size="14" text-anchor="start" font-weight="normal" fill="#000" textLength="38" lengthAdjust="spacingAndGlyphs" filter="url(#crisp)">Jan 04</text>
<text id="t33" x="359.625" y="627" font-size="14" text-anchor="start" font-weight="normal" fill="#000" textLength="39" lengthAdjust="spacingAndGlyphs" filter="url(#crisp)">Mrz 04</text>
<text id="t34" x="489.000" y="627" font-size="14" text-anchor="start" font-weight="normal" fill="#000" textLength="39" lengthAdjust="spacingAndGlyphs" filter="url(#crisp)">Mai 04</text>
<text id="t35" x="614.000" y="627" font-size="14" text-anchor="start" font-weight="normal" fill="#000" textLength="33" lengthAdjust="spacingAndGlyphs" filter="url(#crisp)">Jul 04</text>
<rect x="718.5" y="96.5" width="17" height="17" fill="#fff" stroke="#000"/>
<text id="t36" x="720.750" y="109.5" font-size="14" text-anchor="start" font-weight="normal" fill="#000" textLength="10.5" lengthAdjust="spacingAndGlyphs" filter="url(#crisp)">%</text>
<rect x="718.5" y="355.5" width="17" height="17" fill="#fff" stroke="#000"/>
<rect x="720" y="363" width="8" height="1" fill="#000000"/>
<rect x="720" y="365" width="8" height="1" fill="#000000"/>
<rect x="729" y="367" width="2" height="2" fill="#000000"/>
<rect x="720" y="370" width="13" height="1" fill="#000000"/>
<rect x="27.5" y="355.5" width="13" height="17" fill="#fff" stroke="#000"/>
<text id="t37" x="30.000" y="368" font-size="12" text-anchor="start" font-weight="bold" fill="#000" textLength="6" lengthAdjust="spacingAndGlyphs" filter="url(#crispb)">a</text>
<rect x="29" y="370" width="9" height="1" fill="#000000"/>
<rect x="44.5" y="98.5" width="196" height="19" fill="#fff" stroke="#000"/>
<rect x="49" y="108" width="13" height="1" fill="#0000ff"/>
<text id="t38" x="64.875" y="113" font-size="14" text-anchor="start" font-weight="normal" fill="#000" textLength="173.5" lengthAdjust="spacingAndGlyphs" filter="url(#crisp)">Close (*) 3720,64 EUR (10.8.)</text>
<rect x="44.5" y="357.5" width="166" height="18" fill="#fff" stroke="#000"/>
<rect x="50" y="367" width="12" height="1" fill="#0000ff"/>
<text id="t39" x="65.625" y="372" font-size="14" text-anchor="start" font-weight="normal" fill="#000" textLength="141.5" lengthAdjust="spacingAndGlyphs" filter="url(#crisp)">DSS5 (*) 29,5367 (10.8.)</text>
<defs><pattern id="dither" width="2" height="2" patternUnits="userSpaceOnUse"><rect width="2" height="2" fill="#fff"/><rect width="1" height="1" fill="#c0c0c0"/><rect x="1" y="1" width="1" height="1" fill="#c0c0c0"/></pattern><filter id="crisp" x="-0.2" y="-0.3" width="1.4" height="1.6" filterUnits="objectBoundingBox" color-interpolation-filters="sRGB"><feComponentTransfer><feFuncA type="discrete" tableValues="0 0 0 0 1 1 1 1 1 1"/></feComponentTransfer></filter><filter id="crispb" x="-0.2" y="-0.3" width="1.4" height="1.6" filterUnits="objectBoundingBox" color-interpolation-filters="sRGB"><feComponentTransfer><feFuncA type="discrete" tableValues="0 1"/></feComponentTransfer></filter><pattern id="dither2" width="2" height="2" patternUnits="userSpaceOnUse"><rect width="2" height="2" fill="#fff"/><rect width="1" height="1" fill="#000"/><rect x="1" y="1" width="1" height="1" fill="#808080"/></pattern><clipPath id="c1"><rect x="43" y="97" width="673" height="255"/></clipPath><clipPath id="c2"><rect x="43" y="356" width="673" height="253"/></clipPath></defs>
<polyline points="43.5,347.8 45.0,338.7 47.0,328.7 48.5,335.7 50.1,342.8 51.1,330.7 52.1,322.7 53.1,306.1 56.1,310.5 58.6,321.7 60.1,317.6 62.6,306.5 64.1,295.5 65.6,290.5 68.1,291.5 69.5,276.3 71.2,274.5 72.9,274.5 74.6,269.5 76.7,266.1 78.9,265.2 81.8,280.5 84.5,268.5 87.5,264.4 89.1,269.5 90.8,284.9 93.4,285.5 95.1,289.1 96.8,295.9 99.4,278.0 101.1,266.1 102.8,260.1 106.2,252.5 110.5,243.9 113.7,220.5 115.7,221.3 120.0,228.1 122.5,223.0 125.1,211.9 127.7,218.7 131.1,224.7 139.6,208.5 140.5,207.5 143.0,239.2 146.5,241.8 152.4,248.5 156.7,223.0 159.2,223.9 162.6,229.8 166.1,220.5 168.6,220.5 172.0,200.8 174.6,205.1 178.7,186.4 181.5,191.5 185.5,203.5 188.3,196.9 190.9,202.0 193.4,194.3 196.8,190.1 201.1,188.3 207.1,194.3 212.2,182.4 215.6,185.8 219.0,179.0 225.0,173.0 233.5,163.5 237.8,155.9 240.3,150.8 244.6,145.7 247.1,146.5 250.0,154.0 252.9,142.5 255.7,147.7 260.0,156.2 262.5,149.5 264.3,139.1 267.7,131.5 272.8,118.7 275.4,126.5 278.8,118.7 282.2,117.8 285.1,116.1 288.1,122.1 292.4,116.1 296.7,132.3 299.2,140.0 301.8,137.1 305.2,140.0 311.2,151.1 314.6,137.5 316.3,128.1 320.5,123.8 322.3,123.8 324.9,124.6 327.8,139.1 330.9,135.7 334.3,129.8 337.3,129.5 340.2,117.8 342.8,134.9 344.8,136.5 348.2,156.2 352.2,154.5 357.3,148.5 361.5,130.5 363.3,128.9 365.8,136.5 368.4,122.9 370.1,120.4 371.8,117.8 374.4,119.5 376.1,124.6 379.5,140.9 382.0,164.7 382.9,179.2 385.5,176.7 388.1,198.9 388.9,203.8 391.9,200.8 393.1,192.0 394.9,181.3 396.1,195.1 396.9,200.0 399.5,201.2 400.7,206.5 401.5,213.4 402.6,222.5 404.1,225.5 409.1,225.5 410.2,221.0 411.0,208.8 411.7,203.8 414.8,200.5 415.9,197.4 417.9,185.5 421.3,187.3 423.9,191.5 426.5,173.5 429.0,153.1 431.5,142.9 437.5,154.9 441.8,150.5 449.5,137.8 452.0,151.5 454.5,154.0 457.1,146.3 460.0,148.5 464.0,139.5 466.6,147.2 469.1,140.4 471.7,130.1 474.3,123.3 478.5,119.9 481.1,136.1 483.6,150.5 487.1,159.1 489.6,153.1 492.2,155.7 495.6,148.9 496.5,156.5 499.0,178.7 501.5,181.3 503.3,196.5 505.0,211.1 506.7,194.1 510.1,212.8 513.5,200.9 516.1,206.0 518.6,218.0 522.0,206.0 525.5,188.1 528.9,195.8 533.1,189.0 535.7,199.8 539.1,187.9 541.7,178.5 544.3,179.4 547.7,175.9 551.1,189.5 556.2,179.4 557.9,173.4 559.6,164.9 562.2,151.2 564.7,150.4 568.1,155.5 571.5,150.4 574.1,151.2 576.7,169.1 580.1,156.3 583.5,153.8 586.1,158.0 588.6,155.5 591.2,158.0 593.7,173.4 596.3,169.1 599.7,153.8 602.3,152.1 604.8,140.1 606.1,137.0 609.1,137.0 611.7,140.1 615.1,147.8 616.8,153.8 620.2,156.3 623.6,170.0 626.2,172.5 628.8,171.7 632.2,175.9 635.6,182.8 639.0,180.2 641.2,181.1 643.3,193.9 645.8,195.5 649.0,203.5 652.0,195.5 655.1,186.9 656.7,204.5 660.0,207.5 661.7,208.3 664.4,218.5 666.9,203.1 669.4,204.0 671.7,183.5 675.4,181.8 677.9,190.3 681.0,186.9 683.9,199.7 686.5,200.5 689.0,211.7 690.7,225.3 693.3,235.5 696.3,228.7" fill="none" stroke="#0000ff" stroke-width="1" clip-path="url(#c1)"/>
<polyline points="43.2,606.9 46.7,590.0 50.3,568.5 52.1,550.8 53.9,527.5 55.7,509.8 56.5,500.5 62.3,470.2 68.2,444.2 70.7,427.4 73.2,415.7 75.7,409.0 78.7,404.8 81.6,415.7 84.1,424.1 87.5,429.9 89.2,435.8 92.5,450.9 95.0,471.0 96.7,495.5 99.0,507.1 101.1,495.5 104.3,467.7 107.6,440.8 111.0,420.7 113.1,410.1 114.9,402.2 118.4,398.7 125.4,401.3 128.0,411.8 130.7,427.6 133.3,438.1 136.8,453.9 139.4,451.3 142.1,464.5 144.9,490.5 145.7,500.3 148.2,524.6 151.2,541.7 153.9,555.1 156.1,538.1 159.2,514.9 161.6,500.3 163.5,490.5 168.4,473.2 174.5,439.9 177.2,420.6 179.8,408.3 182.7,409.2 185.8,422.3 188.4,435.5 191.0,443.4 191.9,450.4 194.5,454.8 198.0,455.7 201.5,460.9 205.1,469.7 207.7,485.5 209.4,491.6 214.7,486.4 217.3,473.2 222.6,462.7 228.7,450.4 233.1,436.4 240.1,418.8 241.9,411.8 244.5,398.7 246.8,390.8 251.5,399.5 254.2,403.9 256.8,423.2 258.6,436.4 260.1,464.5 261.9,474.1 263.7,476.7 267.2,464.5 269.8,445.1 272.4,423.2 275.9,417.1 278.9,411.8 284.7,416.2 286.5,422.3 288.2,432.0 290.0,439.9 292.6,446.0 295.2,464.5 297.2,490.5 298.9,508.0 302.4,536.1 306.8,560.7 310.3,580.0 313.0,580.9 314.7,571.2 316.5,548.4 318.2,522.1 320.0,501.0 322.3,475.9 324.9,455.8 327.5,468.9 331.0,486.5 333.7,493.5 336.6,498.7 339.8,483.0 342.4,486.5 345.4,513.3 348.9,536.1 352.4,560.7 355.1,565.9 357.7,564.2 360.1,538.6 362.4,518.8 364.6,502.0 367.9,474.2 371.4,451.4 374.0,436.5 375.8,438.2 377.5,453.1 380.1,483.0 382.9,523.4 386.0,550.8 388.3,573.7 391.8,593.5 395.9,585.9 400.5,579.0 404.3,583.5 409.1,592.0 411.9,578.2 414.2,558.4 416.5,534.0 418.0,512.7 419.5,500.5 423.7,464.5 427.2,438.1 429.8,420.6 432.4,405.7 435.1,399.9 437.7,402.2 441.2,408.3 445.6,410.1 450.0,411.8 451.7,422.3 453.5,438.1 457.0,455.7 460.5,473.2 463.1,472.3 466.6,476.7 470.1,471.5 473.7,457.4 477.2,441.6 479.8,434.6 481.6,446.9 484.2,473.2 486.9,508.0 489.5,529.1 492.2,543.1 493.0,546.6 496.5,544.0 499.2,551.9 501.8,558.9 503.5,574.7 507.1,587.0 510.6,598.4 513.2,598.9 518.5,593.1 521.1,583.5 522.9,569.5 524.6,546.6 527.3,525.6 529.0,508.0 531.0,490.5 532.5,479.4 535.1,480.2 538.7,476.7 543.0,462.7 548.0,446.0 550.9,453.0 554.4,465.3 557.1,465.3 559.7,452.2 562.3,429.4 565.0,415.3 567.6,411.8 571.1,406.5 573.7,410.1 576.4,425.9 578.1,439.9 580.8,450.4 586.0,456.5 588.7,453.9 591.3,455.7 593.9,473.2 597.5,500.5 601.0,485.5 604.5,459.2 607.2,439.9 609.8,427.6 612.1,423.7 614.2,429.4 615.9,441.6 617.7,468.0 619.1,475.2 621.6,512.2 623.0,530.5 624.2,545.5 625.5,558.0 627.4,569.2 628.6,573.6 631.1,577.4 634.2,584.2 638.0,588.6 641.1,579.9 644.2,588.0 646.8,596.8 649.0,604.9 651.8,598.0 653.6,583.0 655.5,570.5 658.0,564.9 659.9,568.0 661.8,575.5 664.2,588.6 666.8,585.5 668.6,580.5 670.5,564.2 671.1,554.2 671.7,540.5 673.6,508.5 675.8,488.2 678.0,475.1 680.1,467.2 681.3,465.7 683.8,474.4 685.9,486.7 688.1,505.5 690.3,527.3 691.8,543.0 693.6,559.2 696.1,569.2" fill="none" stroke="#0000ff" stroke-width="1" clip-path="url(#c2)"/>
<rect x="106" y="251" width="8" height="3" fill="#000000"/>
<rect x="107" y="252" width="6" height="1" fill="#0000ff"/>
<rect x="106" y="256" width="8" height="3" fill="#000000"/>
<rect x="107" y="257" width="6" height="1" fill="#0000ff"/>
<rect x="173" y="194" width="8" height="3" fill="#000000"/>
<rect x="174" y="195" width="6" height="1" fill="#0000ff"/>
<rect x="173" y="199" width="8" height="3" fill="#000000"/>
<rect x="174" y="200" width="6" height="1" fill="#0000ff"/>
<rect x="228" y="171" width="8" height="3" fill="#000000"/>
<rect x="229" y="172" width="6" height="1" fill="#0000ff"/>
<rect x="228" y="176" width="8" height="3" fill="#000000"/>
<rect x="229" y="177" width="6" height="1" fill="#0000ff"/>
<rect x="268" y="126" width="8" height="3" fill="#000000"/>
<rect x="269" y="127" width="6" height="1" fill="#0000ff"/>
<rect x="268" y="131" width="8" height="3" fill="#000000"/>
<rect x="269" y="132" width="6" height="1" fill="#0000ff"/>
<rect x="474" y="127" width="8" height="3" fill="#000000"/>
<rect x="475" y="128" width="6" height="1" fill="#0000ff"/>
<rect x="474" y="132" width="8" height="3" fill="#000000"/>
<rect x="475" y="133" width="6" height="1" fill="#0000ff"/>
<rect x="604" y="144" width="8" height="3" fill="#000000"/>
<rect x="605" y="145" width="6" height="1" fill="#0000ff"/>
<rect x="604" y="149" width="8" height="3" fill="#000000"/>
<rect x="605" y="150" width="6" height="1" fill="#0000ff"/>
<rect x="65" y="435" width="8" height="3" fill="#000000"/>
<rect x="66" y="436" width="6" height="1" fill="#0000ff"/>
<rect x="65" y="440" width="8" height="3" fill="#000000"/>
<rect x="66" y="441" width="6" height="1" fill="#0000ff"/>
<rect x="106" y="431" width="8" height="3" fill="#000000"/>
<rect x="107" y="432" width="6" height="1" fill="#0000ff"/>
<rect x="106" y="436" width="8" height="3" fill="#000000"/>
<rect x="107" y="437" width="6" height="1" fill="#0000ff"/>
<rect x="173" y="430" width="8" height="3" fill="#000000"/>
<rect x="174" y="431" width="6" height="1" fill="#0000ff"/>
<rect x="173" y="435" width="8" height="3" fill="#000000"/>
<rect x="174" y="436" width="6" height="1" fill="#0000ff"/>
<rect x="228" y="444" width="8" height="3" fill="#000000"/>
<rect x="229" y="445" width="6" height="1" fill="#0000ff"/>
<rect x="228" y="449" width="8" height="3" fill="#000000"/>
<rect x="229" y="450" width="6" height="1" fill="#0000ff"/>
<rect x="268" y="430" width="8" height="3" fill="#000000"/>
<rect x="269" y="431" width="6" height="1" fill="#0000ff"/>
<rect x="268" y="435" width="8" height="3" fill="#000000"/>
<rect x="269" y="436" width="6" height="1" fill="#0000ff"/>
<rect x="369" y="443" width="8" height="3" fill="#000000"/>
<rect x="370" y="444" width="6" height="1" fill="#0000ff"/>
<rect x="369" y="448" width="8" height="3" fill="#000000"/>
<rect x="370" y="449" width="6" height="1" fill="#0000ff"/>
<rect x="424" y="433" width="8" height="3" fill="#000000"/>
<rect x="425" y="434" width="6" height="1" fill="#0000ff"/>
<rect x="424" y="438" width="8" height="3" fill="#000000"/>
<rect x="425" y="439" width="6" height="1" fill="#0000ff"/>
<rect x="474" y="442" width="8" height="3" fill="#000000"/>
<rect x="475" y="443" width="6" height="1" fill="#0000ff"/>
<rect x="474" y="447" width="8" height="3" fill="#000000"/>
<rect x="475" y="448" width="6" height="1" fill="#0000ff"/>
<rect x="557" y="439" width="8" height="3" fill="#000000"/>
<rect x="558" y="440" width="6" height="1" fill="#0000ff"/>
<rect x="557" y="444" width="8" height="3" fill="#000000"/>
<rect x="558" y="445" width="6" height="1" fill="#0000ff"/>
<rect x="604" y="438" width="8" height="3" fill="#000000"/>
<rect x="605" y="439" width="6" height="1" fill="#0000ff"/>
<rect x="604" y="443" width="8" height="3" fill="#000000"/>
<rect x="605" y="444" width="6" height="1" fill="#0000ff"/>
<rect x="656" y="191" width="8" height="3" fill="#000000"/>
<rect x="657" y="192" width="6" height="1" fill="#ffff00"/>
<rect x="656" y="196" width="8" height="3" fill="#000000"/>
<rect x="657" y="197" width="6" height="1" fill="#ffff00"/>
<rect x="691" y="211" width="8" height="3" fill="#000000"/>
<rect x="692" y="212" width="6" height="1" fill="#ffff00"/>
<rect x="691" y="216" width="8" height="3" fill="#000000"/>
<rect x="692" y="217" width="6" height="1" fill="#ffff00"/>
<rect x="305" y="565" width="8" height="3" fill="#000000"/>
<rect x="306" y="566" width="6" height="1" fill="#ffff00"/>
<rect x="305" y="570" width="8" height="3" fill="#000000"/>
<rect x="306" y="571" width="6" height="1" fill="#ffff00"/>
<rect x="384" y="562" width="8" height="3" fill="#000000"/>
<rect x="385" y="563" width="6" height="1" fill="#ffff00"/>
<rect x="384" y="567" width="8" height="3" fill="#000000"/>
<rect x="385" y="568" width="6" height="1" fill="#ffff00"/>
<rect x="500" y="565" width="8" height="3" fill="#000000"/>
<rect x="501" y="566" width="6" height="1" fill="#ffff00"/>
<rect x="500" y="570" width="8" height="3" fill="#000000"/>
<rect x="501" y="571" width="6" height="1" fill="#ffff00"/>
<rect x="624" y="558" width="8" height="3" fill="#000000"/>
<rect x="625" y="559" width="6" height="1" fill="#ffff00"/>
<rect x="624" y="563" width="8" height="3" fill="#000000"/>
<rect x="625" y="564" width="6" height="1" fill="#ffff00"/>
<rect x="656" y="556" width="8" height="3" fill="#000000"/>
<rect x="657" y="557" width="6" height="1" fill="#ffff00"/>
<rect x="656" y="561" width="8" height="3" fill="#000000"/>
<rect x="657" y="562" width="6" height="1" fill="#ffff00"/>
<rect x="691" y="553" width="8" height="3" fill="#000000"/>
<rect x="692" y="554" width="6" height="1" fill="#ffff00"/>
<rect x="691" y="558" width="8" height="3" fill="#000000"/>
<rect x="692" y="559" width="6" height="1" fill="#ffff00"/>
<path d="M47.5 322.5 L52.5 312.5 L57.5 322.5 Z" fill="#10a010" stroke="#000"/>
<path d="M310.5 147.5 L315.5 137.5 L320.5 147.5 Z" fill="#10a010" stroke="#000"/>
<path d="M409.5 217.5 L414.5 207.5 L419.5 217.5 Z" fill="#10a010" stroke="#000"/>
<path d="M519.5 204.5 L524.5 194.5 L529.5 204.5 Z" fill="#10a010" stroke="#000"/>
<path d="M652.5 223.5 L657.5 213.5 L662.5 223.5 Z" fill="#10a010" stroke="#000"/>
<path d="M666.5 200.5 L671.5 190.5 L676.5 200.5 Z" fill="#10a010" stroke="#000"/>
<path d="M47.5 557.5 L52.5 547.5 L57.5 557.5 Z" fill="#10a010" stroke="#000"/>
<path d="M311.5 572.5 L316.5 562.5 L321.5 572.5 Z" fill="#10a010" stroke="#000"/>
<path d="M409.5 570.5 L414.5 560.5 L419.5 570.5 Z" fill="#10a010" stroke="#000"/>
<path d="M519.5 562.5 L524.5 552.5 L529.5 562.5 Z" fill="#10a010" stroke="#000"/>
<path d="M652.5 581.5 L657.5 571.5 L662.5 581.5 Z" fill="#10a010" stroke="#000"/>
<path d="M666.5 555.5 L671.5 545.5 L676.5 555.5 Z" fill="#10a010" stroke="#000"/>
<path d="M85.5 269.5 L95.5 269.5 L90.5 279.5 Z" fill="#ff0000" stroke="#000"/>
<path d="M128.5 202.5 L138.5 202.5 L133.5 212.5 Z" fill="#ff0000" stroke="#000"/>
<path d="M186.5 184.5 L196.5 184.5 L191.5 194.5 Z" fill="#ff0000" stroke="#000"/>
<path d="M253.5 138.5 L263.5 138.5 L258.5 148.5 Z" fill="#ff0000" stroke="#000"/>
<path d="M283.5 102.5 L293.5 102.5 L288.5 112.5 Z" fill="#ff0000" stroke="#000"/>
<path d="M371.5 114.5 L381.5 114.5 L376.5 124.5 Z" fill="#ff0000" stroke="#000"/>
<path d="M449.5 136.5 L459.5 136.5 L454.5 146.5 Z" fill="#ff0000" stroke="#000"/>
<path d="M475.5 120.5 L485.5 120.5 L480.5 130.5 Z" fill="#ff0000" stroke="#000"/>
<path d="M574.5 140.5 L584.5 140.5 L579.5 150.5 Z" fill="#ff0000" stroke="#000"/>
<path d="M611.5 138.5 L621.5 138.5 L616.5 148.5 Z" fill="#ff0000" stroke="#000"/>
<path d="M85.5 435.5 L95.5 435.5 L90.5 445.5 Z" fill="#ff0000" stroke="#000"/>
<path d="M128.5 427.5 L138.5 427.5 L133.5 437.5 Z" fill="#ff0000" stroke="#000"/>
<path d="M186.5 434.5 L196.5 434.5 L191.5 444.5 Z" fill="#ff0000" stroke="#000"/>
<path d="M253.5 427.5 L263.5 427.5 L258.5 437.5 Z" fill="#ff0000" stroke="#000"/>
<path d="M284.5 422.5 L294.5 422.5 L289.5 432.5 Z" fill="#ff0000" stroke="#000"/>
<path d="M371.5 428.5 L381.5 428.5 L376.5 438.5 Z" fill="#ff0000" stroke="#000"/>
<path d="M449.5 430.5 L459.5 430.5 L454.5 440.5 Z" fill="#ff0000" stroke="#000"/>
<path d="M475.5 427.5 L485.5 427.5 L480.5 437.5 Z" fill="#ff0000" stroke="#000"/>
<path d="M574.5 432.5 L584.5 432.5 L579.5 442.5 Z" fill="#ff0000" stroke="#000"/>
<path d="M611.5 442.5 L621.5 442.5 L616.5 452.5 Z" fill="#ff0000" stroke="#000"/>
</svg>
</body></html>
